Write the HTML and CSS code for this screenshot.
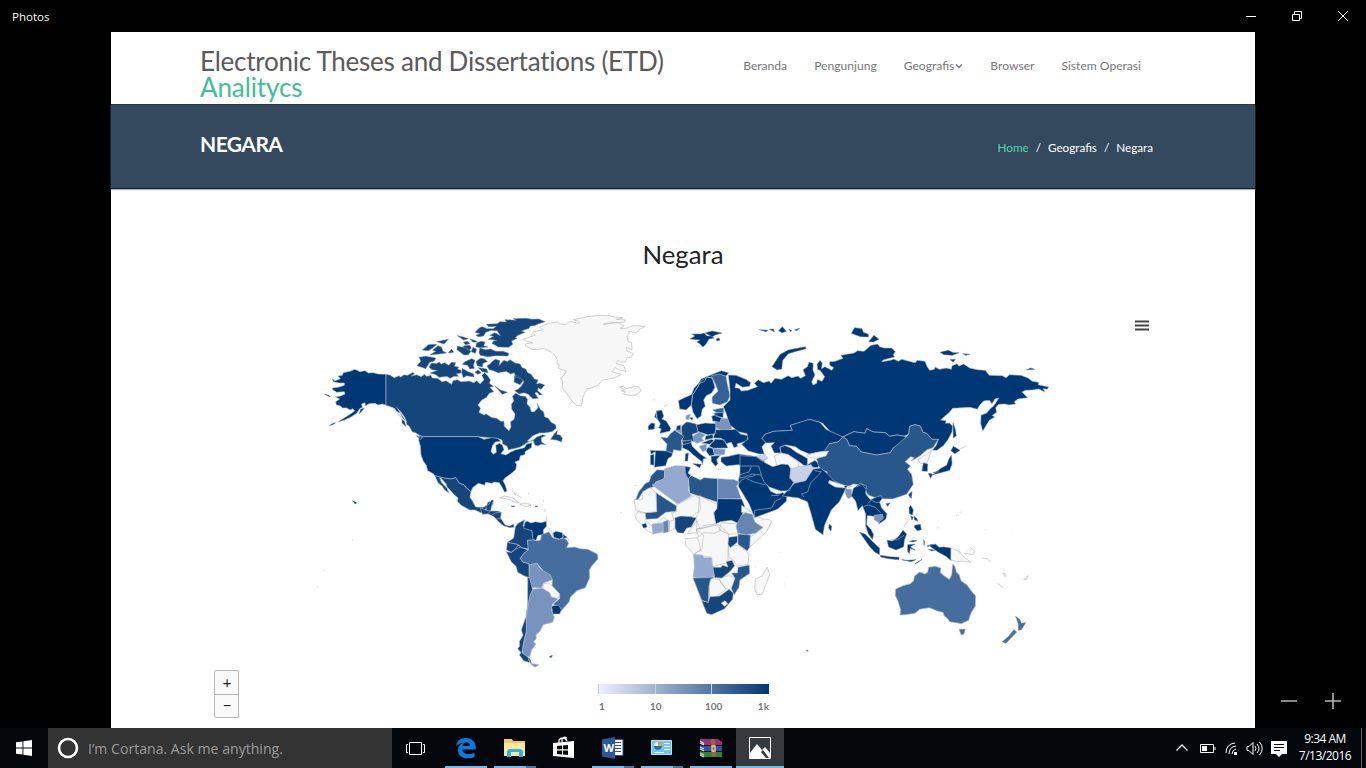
FILE: index.html
```html
<!DOCTYPE html>
<html lang="id">
<head>
<meta charset="utf-8">
<title>Photos</title>
<link rel="stylesheet" href="styles.css">
</head>
<body>
<div class="titlebar">
  <span class="app-name">Photos</span>
  <div class="controls">
    <svg width="12" height="12"><path d="M1 6.5h10"/></svg>
    <svg width="12" height="12"><path d="M1.5 4.5h7v6h-7zM3.5 4V1.5h7v7H9"/></svg>
    <svg width="12" height="12"><path d="M1 1l10 10M11 1L1 11"/></svg>
  </div>
</div>
<div class="viewer">
  <main class="photo">
    <header class="site-head">
      <h1>Electronic Theses and Dissertations (ETD) <em>Analitycs</em></h1>
      <nav><a>Beranda</a><a>Pengunjung</a><a>Geografis<svg width="8" height="6"><path d="M1 1.5l3 3 3-3" fill="none" stroke="#777" stroke-width="1.3"/></svg></a><a>Browser</a><a>Sistem Operasi</a></nav>
    </header>
    <section class="banner">
      <h2>NEGARA</h2>
      <div class="crumbs"><b>Home</b><i>/</i><span>Geografis</span><i>/</i><span>Negara</span></div>
    </section>
    <section class="chart">
      <h3>Negara</h3>
      <div class="map-row">
        <svg class="map" width="770" height="376" viewBox="300 300 770 376">
          <!-- North America -->
          <g transform="translate(310 305) scale(.33333)">
            <path class="a" d="M228 208 205 207 190 203 175 204 165 197 150 200 135 193 120 199 100 203 97 211 84 213 91 221 75 227 67 222 70 230 88 234 103 234 103 241 84 247 67 249 68 254 80 262 103 260 105 267 92 273 76 276 89 282 77 290 79 300 90 302 98 309 111 309 120 315 128 311 134 318 118 329 101 340 89 347 84 351 104 345 123 336 140 325 150 310 157 308 155 297 165 293 166 303 177 296 195 295 204 300 217 297 228 301Z"/>
            <path class="a s" d="M44 268 57 271 60 276ZM58 362 72 357 76 353 65 357ZM148 326 156 318 163 309 152 313Z"/>
            <path class="b" d="M228 208 240 210 253 218 267 212 272 216 282 209 293 211 308 202 314 207 304 213 320 209 334 215 343 208 350 214 363 211 367 219 383 220 396 230 408 227 425 238 428 227 443 224 453 230 478 228 491 233 500 227 510 237 522 224 515 211 524 203 533 212 542 225 538 234 551 245 540 247 552 260 538 265 530 277 515 286 504 300 512 310 507 322 522 330 528 326 544 337 560 340 573 349 582 348 583 364 597 377 603 365 601 351 612 343 615 327 605 313 604 298 611 288 607 274 617 264 631 272 646 274 653 283 651 296 660 307 664 320 673 320 684 308 681 293 692 314 701 320 704 335 715 340 724 352 737 359 739 370 726 380 704 384 689 384 669 392 652 408 665 409 681 395 698 389 708 392 694 398 695 411 709 420 693 418 684 423 675 421 668 404 650 414 630 427 595 435 591 424 578 417 576 405 558 399 548 411 530 414 523 403 543 399 505 395 340 395 328 391 316 383 307 381 297 363 290 359 288 347 278 340 271 325 258 318 253 310 239 306 228 301Z"/>
            <path class="b s" d="M495 82 509 68 517 65 530 71 550 71 559 64 536 65 529 58 562 56 570 50 590 51 585 44 619 46 610 41 647 40 666 43 686 42 705 50 686 56 673 62 661 63 657 70 634 78 645 82 624 91 616 97 621 100 605 108 608 118 596 127 565 126 546 115 551 108 561 106 535 103 551 94 539 91 555 83 571 92 562 77 544 76 527 82 521 93 505 95 498 91 510 86ZM510 129 526 134 541 132 557 139 579 139 596 145 594 153 556 152 533 155 511 151 507 142ZM365 174 380 176 387 171 394 178 403 173 416 181 425 172 437 173 433 184 447 187 442 192 453 196 454 204 439 206 445 214 432 214 420 220 411 214 387 217 378 209 361 204 383 196 366 194 357 186ZM327 157 347 154 377 159 373 168 359 172 347 191 336 187 321 182 333 168ZM546 170 556 163 570 167 566 182 575 173 582 166 592 170 600 164 615 174 630 177 636 188 647 192 653 203 663 208 673 222 684 225 679 237 690 235 704 240 693 253 684 248 683 257 697 269 688 270 681 261 674 264 684 280 669 281 655 268 642 263 627 266 614 257 626 251 634 244 642 230 632 220 617 216 613 203 602 207 589 199 564 203 551 197 538 194 531 183 540 177ZM512 109 525 111 521 122 534 126 509 128 497 125 500 115ZM465 170 485 161 495 166 490 181 493 190 480 192 473 181 457 178ZM511 160 524 162 532 170 519 175 517 186 502 182 498 170ZM384 122 394 126 399 139 410 144 379 148 360 149 378 139 368 136ZM442 123 452 126 467 126 483 139 475 149 462 150 441 134ZM337 135 355 119 380 118 367 130 355 137ZM380 110 415 103 402 117ZM415 144 425 132 431 142ZM460 112 472 109 479 116 467 119ZM442 92 460 96 475 101 461 105ZM481 103 494 106 503 112 488 111ZM458 127 463 122 479 121 484 129 478 136ZM555 243 571 255 592 262 577 268ZM614 212 627 214 639 227 630 239 612 231ZM489 127 500 133 496 145 484 140ZM495 202 504 195 514 203 503 208ZM722 403 735 384 742 377 740 389 750 390 757 400 754 410 739 405ZM276 341 284 350 287 364 276 354ZM456 190 474 200 490 206 492 216 470 212 460 218 456 206ZM505 188 530 192 534 203 517 200Z"/>
            <path class="n" d="M233 302 250 309 262 322 275 340 281 348M259 306 272 320 283 335 290 352"/>
            <path class="a" d="M328 391 340 395 505 395 522 403 546 398 562 400 573 409 556 411 548 421 543 439 550 448 559 442 557 421 568 415 577 420 582 434 573 446 588 450 602 441 618 434 643 428 650 417 666 413 664 428 645 440 645 449 631 452 628 466 615 471 620 479 617 494 602 507 586 518 579 527 586 541 591 558 584 562 576 547 568 533 553 531 545 535 527 532 524 541 505 535 488 548 483 560 470 550 461 539 448 535 437 518 424 522 401 519 374 512 370 506 353 497 349 481 340 469 333 450 331 423 326 405ZM318 391 338 398 330 404Z"/>
            <path class="b" d="M374 512 401 519 424 522 437 518 448 535 461 539 470 550 483 560 480 577 488 589 497 606 519 607 530 601 534 591 550 588 549 598 539 606 535 615 525 612 514 624 495 615 479 615 452 600 442 588 444 579 431 568 421 556 412 547 408 536 393 520 389 519 395 533 411 550 418 565 403 554 397 544 384 533Z"/>
          </g>
          <path class="n" d="M500 498l5-2 8 2 6 5-5-1-6-3zM520 504l6-1 5 2-5 2zM514 494l2 1M546 516l1 6M544 500l-1 1M512 491l3 3 2-1M517 495l5 3M528 493l1 1M545 509v3"/>
          <path class="a s" d="M511 506l4 0-2 1zM535 506l3 0-2 1z"/>
          <!-- Greenland and Iceland -->
          <g transform="translate(480 305) scale(.33333)" class="n">
            <path d="M128 103 166 90 157 82 187 74 179 66 205 55 235 51 241 57 257 59 270 49 298 55 297 49 280 44 323 35 355 31 389 32 403 36 429 38 409 43 436 45 431 53 396 52 369 58 413 53 433 62 421 70 436 71 459 62 496 64 477 74 469 84 446 79 448 87 441 93 444 109 455 113 456 135 438 126 442 138 460 146 452 159 442 157 436 171 423 171 413 166 409 176 431 182 438 200 417 195 407 189 395 200 424 208 407 218 390 221 369 225 351 242 334 249 321 251 309 277 304 304 289 300 275 287 262 268 246 247 248 231 242 217 252 211 259 198 234 190 238 180 231 176 232 164 225 151 214 141 193 131 158 134 136 123 138 116 159 114 142 109Z"/>
            <path d="M418 246 431 244 436 251 456 247 465 243 477 246 484 257 468 270 451 272 430 267 437 261 423 258 434 254Z"/>
          </g>
          <!-- South America -->
          <g transform="translate(480 480) scale(.33333)">
            <path class="b" d="M0 82 19 91 19 76 27 73 34 60 41 60 36 73 32 93 53 93 64 97 62 114 75 134 88 138 101 132 102 142 89 143 70 137 54 124 43 111 25 102 7 103Z"/>
            <path class="l" d="M19 91 32 93 22 102M34 106 48 98 62 97M48 117 62 116"/>
            <path class="b" d="M106 140 114 130 134 119 129 137 156 152 159 167 162 180 142 181 146 207 125 203 111 193 82 187 101 174Z"/>
            <path class="a" d="M134 128 141 123 153 129 167 125 181 128 199 124 200 138 190 150 191 164 174 166 168 181 159 179 156 152 131 145ZM219 159 228 154 247 158 250 171 239 178 221 172ZM249 162 262 172 258 180 249 176Z"/>
            <path class="b" d="M82 187 111 193 122 201 106 208 94 217 79 210ZM79 215 94 217 106 208 114 194 125 203 145 210 132 220 121 235 128 246 147 251 148 293 133 288 113 277 108 259 94 246Z"/>
            <path class="e" d="M142 181 162 180 168 182 181 181 184 166 190 162 207 155 218 173 235 178 257 174 266 190 260 203 283 201 301 206 324 208 353 223 354 237 335 258 328 271 329 294 316 323 291 332 272 350 267 366 244 392 220 372 239 356 239 342 216 320 217 299 193 276 171 250 148 255 147 251 128 246 121 235 132 220 145 210Z"/>
            <path class="g" d="M148 255 171 250 180 265 193 274 211 284 217 299 191 309 185 324 169 323 154 322 147 304ZM158 328 185 324 204 333 224 348 233 357 216 374 215 392 223 412 218 427 190 434 180 454 168 464 169 477 160 485 168 492 155 510 150 529 142 530 126 518 130 489 139 453 139 407 145 368 151 342Z"/>
            <path class="n" d="M189 312 205 308 217 318 239 342 235 356 214 351 209 338 189 326Z"/>
            <path class="a" d="M215 378 237 375 244 390 239 402 218 402Z"/>
            <path class="b" d="M143 292 148 293 153 310 158 328 151 342 145 368 139 407 139 453 130 489 126 518 142 530 152 540 154 549 132 543 118 525 123 518 113 506 119 498 118 485 129 466 124 449 138 410 143 374Z"/>
            <path class="g" d="M145 536 151 550 177 554 165 562 153 553Z"/>
            <path class="b s" d="M207 530 217 526 214 533Z"/>
            <path class="n" d="M203 142 216 154 219 169M253 176 262 172 267 183"/>
          </g>
          <!-- Europe -->
          <g transform="translate(620 350) scale(.33333)">
            <path class="a" d="M175 152 193 143 214 134 222 115 236 100 243 87 274 74 304 62 326 68 318 79 297 75 283 84 261 81 252 96 240 99 229 118 218 134 214 165 198 180 179 177ZM243 93 261 81 277 85 285 112 275 129 259 137 251 150 256 169 247 177 243 199 231 206 219 187 214 165 218 134 229 118Z"/>
            <path class="d" d="M274 77 300 72 318 79 321 97 330 137 322 156 299 165 277 160 276 142 294 123 286 102ZM278 179 310 173 312 188 289 188Z"/>
            <path class="g" d="M199 196 211 193 207 209 197 207ZM287 234 285 217 306 204 325 206 336 226 334 239 306 240ZM218 259 238 246 256 256 245 263 251 272 232 280 217 273ZM237 289 259 282 260 300 248 305ZM279 296 316 298 313 314 281 314ZM164 241 184 238 184 251Z"/>
            <path class="a" d="M275 199 286 194 304 204 300 217 278 213ZM281 190 310 187 309 203 286 198ZM230 224 256 219 287 221 287 251 265 255 232 244ZM171 228 182 225 182 240 168 241ZM91 301 144 303 158 310 155 319 144 326 137 347 103 352 106 305 93 313ZM91 316 102 312 102 346 91 344ZM257 258 278 253 280 264 255 270ZM244 279 274 268 284 272 269 283ZM267 289 285 267 313 269 324 294 281 295ZM287 239 336 239 348 237 361 252 385 257 381 273 351 282 354 289 342 293 334 277 319 281 304 265 280 264ZM188 283 213 275 217 289 240 311 260 325 250 327 248 345 244 334 219 314 207 302 187 293ZM264 292 278 295 283 315 269 318 258 303ZM273 319 302 316 290 328 294 341 287 349 274 335ZM303 322 326 319 354 312 398 318 427 322 434 337 399 342 374 351 355 344 319 348 303 335Z"/>
            <path class="a s" d="M109 183 125 181 131 199 125 207 138 213 152 235 149 243 120 250 124 236 116 233 122 221 112 206ZM85 228 95 219 104 221 103 237 85 239ZM219 341 244 343 239 353ZM197 311 205 309 203 333 195 333ZM107 190 104 200 110 206ZM210 203 219 203 216 211Z"/>
            <path class="b" d="M184 230 199 216 208 217 229 222 234 247 217 253 222 274 187 273Z"/>
            <path class="c" d="M122 262 142 263 151 251 164 241 192 259 184 271 186 288 183 303 161 299 158 310 138 302 141 282Z"/>
            <path class="b" d="M186 274 215 270 213 278 190 284Z"/>
            <path class="n" d="M101 148 105 151M132 172 141 162M110 184 120 180M290 357 303 359"/>
          </g>
          <!-- Svalbard -->
          <path class="a s" d="M690 339l5-3-3-2 5 0 4 0 3-1 3 3 4 0 3 2-5 1-3 5-3 3-3-3-3-2 3-2zM705 333l7-2 10 2-7 2-3 2-3-2zM716 339l3-1 1 2-3 1z"/>
          <!-- Africa and Arabia -->
          <g transform="translate(620 450) scale(.33333)">
            <path class="c" d="M134 61 133 87 107 96 104 109 83 116 67 128 54 149 46 152 56 126 76 100 87 96 93 78 111 59ZM108 128 170 168 168 184 137 187 112 206 77 208 73 188 110 185ZM205 83 215 77 241 90 252 83 293 86 293 157 209 129Z"/>
            <path class="h" d="M133 57 165 47 195 48 198 65 206 87 205 123 215 137 173 162 96 105 134 84Z"/>
            <path class="f" d="M293 86 344 89 357 97 350 108 364 146 293 146Z"/>
            <path class="a" d="M195 49 212 52 204 70 213 76 204 87 196 69ZM293 146 365 147 374 168 365 201 354 220 334 211 302 215 287 222 281 189 290 175Z"/>
            <path class="n" d="M42 149 67 149 68 125 91 113 108 128 110 185 65 189 48 181ZM170 165 226 136 238 145 235 185 218 199 166 202 161 209 155 189 170 184ZM238 137 291 163 291 175 281 188 287 222 241 237 227 205 241 177ZM304 218 353 222 368 251 326 253 297 239ZM365 166 404 193 428 207 447 208 455 213 441 244 391 290 389 262 428 236 402 215 377 187 364 187ZM326 287 356 286 387 310 384 343 353 349 339 330 326 321ZM228 237 264 231 296 224 327 252 324 301 324 337 279 350 273 322 221 313 245 299 250 256ZM228 237 241 237 250 226 287 222 304 240 283 250 250 248 237 262ZM197 266 233 263 239 283 242 299 222 313 197 286ZM274 386 296 387 318 417 289 440 269 443 268 404ZM297 387 326 376 345 383 342 411 327 420 309 407ZM45 197 57 182 76 190 78 211 96 228 101 253 77 239 49 208ZM406 387 427 377 442 352 449 374 435 411 427 433 412 434 404 416ZM113 219 130 202 149 215 145 244 132 219ZM149 214 168 208 166 235 149 245ZM201 251 230 213 230 249Z"/>
            <path class="h" d="M96 222 129 220 129 246 99 252ZM221 314 247 315 252 323 275 323 277 348 288 353 280 384 219 382 223 351Z"/>
            <path class="f" d="M129 216 145 210 145 246 130 249ZM365 195 376 188 397 193 405 217 429 232 406 250 378 255 353 249 348 228Z"/>
            <path class="b" d="M165 203 183 198 211 200 229 204 214 231 200 235 190 250 173 248 165 235ZM279 352 303 352 308 346 324 351 318 335 336 331 344 347 331 364 306 384 284 383ZM326 262 353 258 352 277 331 293 324 283ZM245 452 265 457 270 440 299 438 327 418 340 429 338 448 313 477 275 494 260 490Z"/>
            <path class="c" d="M354 252 391 255 389 292 382 303 354 283ZM354 352 388 345 389 370 360 390 357 412 342 435 334 415 345 385 335 369 352 369ZM219 384 280 382 271 389 267 407 265 457 245 451Z"/>
            <path class="a s" d="M66 224 77 220 81 231 71 234Z"/>
            <path class="n" d="M304 459 315 452 324 461 313 469Z"/>
            <path class="a" d="M356 88 363 54 409 47 433 65 440 94 482 123 501 137 499 154 472 178 404 203 387 162 355 109Z"/>
            <path class="l" d="M356 104 361 93 377 84 402 96 437 105M363 75 395 60 409 47M382 82 404 77 407 48M404 203 404 181 455 174 466 153 484 145M454 137 476 136 482 126"/>
            <path class="w" d="M437 88 452 98 480 118 488 128 470 132 452 124 440 102Z"/>
            <path class="n" d="M44 106h5M0 188h4M185 278v2M404 349l4 2M478 307h2M491 402h3"/>
          </g>
          <!-- Asia -->
          <g transform="translate(740 320) scale(.33333)">
            <path class="a" d="M-35 165 -12 166 18 178 32 188 29 199 8 202 -12 190 -15 203 -2 205 4 213 23 211 52 200 43 190 55 179 70 188 87 183 93 190 105 175 124 178 145 167 155 173 174 168 182 175 196 167 189 149 202 140 207 126 220 130 219 150 225 165 215 185 219 195 230 190 232 178 246 184 254 170 240 151 233 149 231 133 240 121 247 129 245 146 254 140 265 145 275 151 281 143 269 136 269 125 285 124 309 115 302 106 342 99 353 92 372 94 393 76 413 72 419 80 433 84 455 84 466 95 460 104 464 111 430 120 425 125 451 121 462 117 475 124 485 118 525 128 532 121 555 124 561 139 569 151 583 148 585 141 598 148 619 144 634 148 636 137 651 131 657 138 671 132 689 144 712 149 736 151 748 166 787 167 798 173 809 164 843 166 864 174 877 184 896 187 895 194 926 201 922 208 910 206 915 217 897 207 878 210 857 211 846 216 863 233 834 237 823 245 827 252 807 255 795 252 776 253 767 263 770 277 757 286 764 291 748 301 728 334 722 311 723 286 740 279 752 265 761 258 772 241 776 234 765 237 756 251 748 241 731 243 719 256 712 268 690 262 638 265 629 276 602 300 618 302 617 310 628 309 638 318 636 336 624 359 610 377 591 391 577 391 589 375 595 358 576 358 560 340 549 337 541 318 525 314 509 319 506 343 492 349 471 345 449 349 436 338 400 336 380 326 375 340 341 335 309 351 290 345 270 334 247 309 208 298 193 304 151 316 157 331 101 334 75 343 66 355 78 367 66 380 73 402 57 402 25 393 5 373 24 357 21 341 -5 335 -30 315 -42 280 -50 260 -30 240 -30 210Z"/>
            <path class="a" d="M66 355 75 343 101 334 157 331 151 316 208 298 240 307 258 328 309 351 294 366 268 371 266 391 233 397 208 402 181 391 166 380 137 375 120 382 123 399 103 399 93 378 103 368 79 369ZM309 351 341 335 375 340 380 326 400 336 436 338 449 349 471 345 500 350 488 366 459 385 451 398 410 405 364 396 349 379 329 377 320 358ZM120 382 133 376 151 383 169 397 190 408 203 416 202 434 225 421 240 435 232 443 197 440 171 421 145 404 123 399Z"/>
            <path class="c" d="M309 351 320 358 329 377 349 379 364 396 410 405 451 398 459 385 500 350 506 343 509 319 525 314 541 318 549 337 560 340 576 358 595 358 579 383 560 390 541 407 514 423 522 413 512 410 495 425 512 438 502 448 515 463 520 493 500 523 458 537 413 536 385 525 366 496 340 492 325 500 284 492 262 473 261 455 240 449 230 418 247 402 268 371 294 366Z"/>
            <path class="n" d="M103 408 122 399 145 404 177 429 173 446 154 447 141 433 111 438ZM534 418 560 403 575 390 567 414 561 428 541 431ZM200 405 232 397 266 393 258 408 232 415 208 413Z"/>
            <path class="i" d="M154 447 180 439 214 434 220 447 197 482 163 490 148 473ZM48 409 75 402 84 416 68 422Z"/>
            <path class="a" d="M0 407 48 410 66 423 98 440 126 432 145 434 152 446 149 474 161 487 148 512 122 513 87 501 72 485 63 465 37 462 0 475ZM163 490 197 482 220 447 241 444 258 457 282 482 306 495 322 498 310 521 298 545 274 570 254 615 249 645 226 628 211 574 202 545 175 534 127 528Z"/>
            <path class="l" d="M0 438 33 438 56 438 64 465M224 452 244 455 235 466 212 488 203 516 184 522 193 532M0 464 27 456 34 440M281 490 320 504 322 515"/>
            <path class="a s" d="M96 140 110 119 121 103 145 90 196 80 198 86 164 95 145 101 128 121 125 147 111 149ZM334 40 344 23 366 26 370 37 385 43 385 51 362 50ZM386 65 402 46 417 58 400 66ZM600 97 625 91 640 98 657 98 637 106 612 104ZM668 101 690 103 677 106ZM860 150 872 144 884 148ZM58 29 84 31 78 35ZM88 28 100 27 103 35ZM116 32 127 20 139 34 126 38ZM148 28 155 31 151 35ZM164 29 179 25 170 32ZM630 119 646 118 640 126ZM639 309 645 324 649 347 640 354ZM550 429 563 432 562 454 546 453ZM633 392 640 379 660 391 644 401ZM634 406 636 432 629 451 599 459 579 464 603 445 620 436 627 417ZM565 460 578 462 572 475ZM507 523 516 515 514 535ZM579 459 596 452 594 458Z"/>
            <path class="n" d="M660 387 680 377"/>
          </g>
          <!-- Southeast Asia -->
          <g transform="translate(780 410) scale(.33333)">
            <path class="n" d="M148 211 174 220 194 226 193 234 165 231 145 219ZM203 227 215 229 205 233ZM512 414 540 426 549 438 572 457 552 454 529 454 512 450ZM552 430 578 434 585 424 570 412"/>
            <path class="g" d="M195 236 215 238 215 261 204 266 196 252Z"/>
            <path class="a" d="M220 235 241 220 259 228 257 251 271 269 292 260 305 257 306 266 299 277 305 294 321 311 318 327 296 343 301 325 275 318 262 317 260 344 274 359 281 374 278 389 265 373 257 349 257 312 247 287 234 302 227 274 214 257Z"/>
            <path class="a s" d="M148 342 155 349 153 363 146 354ZM239 367 256 373 278 395 299 415 298 434 283 425 266 406ZM301 436 328 440 357 442 357 449 326 446 302 441ZM321 391 337 393 354 382 369 361 380 372 373 390 371 410 348 420 326 411ZM383 404 405 403 391 410 405 421 391 415 388 431 383 424ZM387 293 392 286 400 300 397 316 388 310ZM318 281 330 279 323 289ZM386 254 396 245 391 264ZM402 319 410 325 414 334 403 329ZM404 346 421 343 424 359 412 362 403 352ZM450 404 467 403 477 412 491 411 512 414 512 451 500 440 473 425 452 410ZM365 449 383 451 408 449 393 455ZM405 461 426 448 416 456ZM441 408 451 404 445 410ZM388 394 400 391 411 392 400 396ZM431 389 434 396 432 407ZM445 418 465 420 455 423ZM392 318 400 322 396 330Z"/>
            <path class="g" d="M282 316 308 313 310 325 295 338 283 329Z"/>
            <path class="l" d="M251 289 266 285 286 292 301 308M264 280 274 270 288 278 301 276M331 389 352 390 373 375M230 231 245 222 258 237"/>
            <path class="n" d="M371 349 386 331M105 365h2M528 318l3-4M540 308l2-3M473 353h2"/>
          </g>
          <!-- Oceania -->
          <g transform="translate(840 500) scale(.33333)">
            <path class="e" d="M167 267 189 257 211 251 221 242 223 229 239 216 254 222 263 217 266 202 285 199 303 204 301 218 317 231 328 238 335 225 338 192 345 200 349 216 358 225 363 242 381 255 394 273 407 288 406 318 392 341 386 361 364 371 329 365 322 355 313 348 309 337 294 334 268 323 239 328 225 340 197 344 180 345 182 329 173 301 166 287ZM357 388 376 387 372 403 363 404Z"/>
            <path class="e s" d="M527 349 541 361 544 370 557 368 544 389 535 391 535 371ZM487 425 506 409 522 389 530 396 509 418 498 430Z"/>
            <path class="n" d="M427 174 443 176 453 187M488 219 498 222 496 230ZM472 251 489 262M551 238 565 227 558 240ZM355 48l2-2M293 84h2M436 89h2M514 86h1M561 180h1"/>
          </g>
          <path class="a s2" d="M352 500l5 3-2 1zM806 650l3 1-2 .5z"/>
          <path class="n" d="M317 587l1-1M324 570h1M352 540h1"/>
        </svg>
        <svg class="menu" width="14" height="11"><path d="M0 1.5h14M0 5.5h14M0 9.5h14" stroke="#444" stroke-width="2.2"/></svg>
      </div>
      <div class="map-foot">
        <div class="zoomer"><span>+</span><span>−</span></div>
        <div class="legend"><div class="ramp"><u></u><u></u><u></u></div><div class="ticks"><span>1</span><span>10</span><span>100</span><span>1k</span></div></div>
      </div>
    </section>
  </main>
  <div class="photo-zoom"><svg width="64" height="20"><path d="M2 10h16M46 10h16M54 2v16" stroke="#b5b5b5" stroke-width="1.6"/></svg></div>
</div>
<footer class="taskbar">
  <div class="start"><svg width="16" height="16"><path fill="#fff" d="M0 2.3 6.5 1.4V7.5H0zM7.4 1.3 16 0V7.5H7.4zM0 8.4h6.5v6.2L0 13.7zM7.4 8.4H16V16L7.4 14.7z"/></svg></div>
  <div class="search"><svg width="22" height="22"><circle cx="11" cy="11" r="9" fill="none" stroke="#fff" stroke-width="2.6"/></svg><span>I’m Cortana. Ask me anything.</span></div>
  <div class="task tv"><svg width="22" height="16"><path fill="none" stroke="#fff" d="M4.500 1.500h12v12h-12zM3 3.500H1.500v8H3M18 3.500h1.500v8H18"/></svg></div>
  <div class="task open"><svg width="22" height="22"><path fill="#0a7be0" d="M1 9C2 3.500 6 1 11 1c6 0 9.700 4 9.700 9v2.500H7.500c0 3 3 4.700 6 4.700 2.400 0 4.300-.6 6-1.600v4.200c-2 1-4.500 1.500-7 1.500C6.500 21.300 3 18 3 13.500 3 10 5 7.200 8.500 5.800 5.500 6 2.800 7 1 9zM7.600 9h7.600c0-2.300-1.300-3.500-3.600-3.500-2.200 0-3.700 1.400-4 3.500z"/></svg></div>
  <div class="task open split"><svg width="22" height="20"><path fill="#f5c75d" d="M0 1h8l1 2h12v15H0z"/><path fill="#ffe69c" d="M0 5h21v13H0z"/><path fill="#26b5e8" d="M3 19v-6l2-2h12l2 2v6h-4v-5H7v5z"/></svg></div>
  <div class="task"><svg width="22" height="24"><path fill="#fff" d="M0 7 21 5v17L0 20z"/><path d="M6 7V4q1-2 4-2t4 3M9 6V3q2-3 5-1" fill="none" stroke="#fff" stroke-width="1.300"/><path fill="#03060b" d="M4 10l5-.5v3.800H4zM10 9.400l5-.5v4.400h-5zM4 14.500h5v4L4 18zM10 14.500h5v4.600l-5-.5z"/></svg></div>
  <div class="task open split"><svg width="22" height="22"><path fill="#fff" stroke="#2b579a" d="M11 2.500h10v16H11z"/><path stroke="#2b579a" d="M13 5.500h6M13 8.500h6M13 11.500h6M13 14.500h6"/><path fill="#2b579a" d="M0 2.500 13 0v22L0 19.500z"/><text x="1.500" y="15" font-size="11" font-weight="700" fill="#fff" font-family="Open Sans, sans-serif">W</text></svg></div>
  <div class="task open split"><svg width="22" height="16"><path fill="#6dc6f1" stroke="#b4e5fb" d="M.5.500h20v14H.5z"/><circle cx="7" cy="6" r="4" fill="#fff"/><path fill="#1976b9" d="M7 6V2a4 4 0 1 1-4 4z"/><path fill="#f49b28" d="M7 6V2a4 4 0 0 1 4 4z"/><path stroke="#fff" d="M13 3.500h6M13 6.500h6M13 9.500h6M3 12.500h10"/></svg></div>
  <div class="task open"><svg width="24" height="20"><path fill="#a32979" d="M1 1h18l4 3v3H4L1 5z"/><path fill="#354fae" d="M1 7l3 1h19v5H4l-3-2z"/><path fill="#298638" d="M1 13l3 1h19v5H4l-3-2z"/><path stroke="#111" stroke-width=".8" d="M4 7.500h19M4 13.500h19"/><path stroke="#e6dfcf" stroke-width="1.300" d="M1 3l4 2.500M1 5l4 2M1 9l4 2M1 11l4 2M1 15l4 2M1 17l4 2"/><path fill="#9b653a" d="M12 1h4l1 18h-4z"/><path fill="none" stroke="#ead287" stroke-width="1.300" d="M13 8h3v5h-3z"/></svg></div>
  <div class="task open active"><svg width="22" height="22"><path fill="none" stroke="#fff" d="M.5.500h21v21H.5z"/><path fill="#fff" d="M1 21v-5l7-9 5 6 3-3 5 6v5z"/><path fill="#36393e" d="M12 15l2-2 6 8h-3z"/></svg></div>
  <div class="tray">
    <svg width="112" height="20"><g fill="none" stroke="#fff"><path stroke-width="1.300" d="M.5 12.500 6 7l5.500 5.500"/><path d="M24.500 6.500h13v8h-13zM39 9v3"/><path d="M50 15q0-9 9-10M53 16q0-7 7-8M56 16q0-4 4-5M71 8.500h2l4-4v12l-4-4h-2zM79 8q2 2.500 0 5M81 6q4 4.500 0 9M83.500 4q5.500 6.500 0 13"/></g><path fill="#fff" d="M26 8h5v5h-5zM58 14h3v3h-3zM95 3h16v13h-5l-3 3-3-3h-5z"/><path stroke="#03060b" d="M98 6.500h10M98 9.500h10M98 12.500h6"/></svg>
    <div class="clock"><span>9:34 AM</span><span>7/13/2016</span></div>
  </div>
</footer>
</body>
</html>
```
FILE: styles.css
```css
* { box-sizing: border-box; }
body { margin: 0; width: 1366px; height: 768px; overflow: hidden; background: #000; color: #fff; font-family: Lato, sans-serif; }
h1, h2, h3 { margin: 0; font-weight: 400; }
svg { display: block; flex-shrink: 0; }
.titlebar { height: 32px; display: flex; justify-content: space-between; padding: 0 17px 0 12px; align-items: center; font: 11.5px "Open Sans", sans-serif; }
.controls { display: flex; gap: 34px; }
.controls svg { fill: none; stroke: #fff; }
.viewer { height: 696px; display: flex; padding-left: 111px; }
.photo { width: 1144px; height: 696px; background: #fff; color: #222; }
.site-head { height: 72px; display: flex; justify-content: space-between; align-items: flex-start; padding: 17px 114px 0 89px; }
h1 { width: 480px; font-size: 26px; line-height: 25.5px; color: #5a5a5a; white-space: nowrap; letter-spacing: -.25px; }
h1 em { display: block; font-style: normal; color: #3fbf92; letter-spacing: -.1px; }
nav { display: flex; gap: 27px; font-size: 12.1px; line-height: 16px; color: #777; padding-top: 9px; }
nav a { display: flex; align-items: center; gap: 1px; white-space: nowrap; }
.banner { height: 85px; background: #34495e; border-top: 1px solid #26384c; border-bottom: 1px solid #12202e; box-shadow: 0 1px 1px #aab3bd; display: flex; justify-content: space-between; padding: 25px 102px 0 89px; color: #fff; }
h2 { font-size: 21px; line-height: 28px; font-weight: 700; letter-spacing: -.55px; }
.crumbs { display: flex; gap: 7px; font-size: 11.7px; line-height: 16px; padding-top: 9px; }
.crumbs b { font-weight: 400; color: #4fd8b0; }
.crumbs i { font-style: normal; }
.chart { height: 539px; padding-top: 48px; }
h3 { font-size: 25.8px; line-height: 34px; text-align: center; }
.map-row { display: flex; margin-top: 29px; padding-left: 189px; height: 370px; }
.map { overflow: visible; }
.map path { stroke: #b0bccb; stroke-width: 1.8; stroke-linejoin: round; }
.map path.s { stroke: #6681a5; stroke-width: 1.6; }
.map path.s2 { stroke: none; }
.map > path { stroke-width: .6; }
.map > path.s { stroke-width: .5; }
.map .a { fill: #003775; }
.map .b { fill: #14467c; }
.map .c { fill: #28578b; }
.map .d { fill: #356295; }
.map .e { fill: #456e9e; }
.map .f { fill: #6685b3; }
.map .g { fill: #7894be; }
.map .h { fill: #94a9cf; }
.map .i { fill: #c9d1e8; }
.map .w { fill: #fff; }
.map path.n, .map .n path { fill: #f7f7f7; stroke: #b4b4b4; }
.map path.l { fill: none; }
.menu { margin: 20px 0 0 65px; }
.map-foot { display: flex; padding-left: 103px; align-items: flex-start; }
.zoomer { width: 25px; height: 48px; border: 1px solid #b7b7b7; border-radius: 2px; background: #f9f9f9; font-size: 15px; }
.zoomer span { display: grid; place-items: center; height: 23px; line-height: 18px; padding: 0 0 2px 1px; }
.zoomer span + span { border-top: 1px solid #b7b7b7; }
.legend { margin: 14px 0 0 359px; width: 171px; }
.ramp { height: 10px; background: linear-gradient(90deg, #efefff, #003775); display: grid; grid-template-columns: 56px 56px 1fr; border-left: 1px solid #ccc; }
.ramp u + u { border-left: 1px solid #cbd5e2; }
.ticks { display: grid; grid-template-columns: 50px 56px 44px 1fr; font: 700 10px/14px Lato, sans-serif; color: #777; padding: 5px 0 0 1px; }
.ticks span { white-space: nowrap; }
.ticks span:nth-child(2) { padding-left: 1px; }
.ticks span:nth-child(3) { text-align: left; }
.ticks span:last-child { text-align: right; }
.photo-zoom { align-self: flex-end; padding: 0 0 17px 24px; }
.taskbar { height: 40px; display: flex; background: #03060b; font-family: "Open Sans", sans-serif; }
.start { width: 48px; display: grid; place-items: center; }
.search { width: 344px; background: #333; display: flex; align-items: center; gap: 9px; padding-left: 9px; color: #9b9b9b; font-size: 14.1px; }
.task { width: 48px; margin-right: 1px; display: grid; place-items: center; padding-top: 1px; border-bottom: 2px solid transparent; }
.task.tv { margin-right: 2px; padding-top: 3px; }
.task.open { border-image: linear-gradient(90deg, transparent 4px, #76b9ed 4px 44px, transparent 44px) 1; border-width: 0 0 2px; }
.task.split { border-image-source: linear-gradient(90deg, transparent 4px, #76b9ed 4px 35px, #4a7599 35px 44px, transparent 44px); }
.task.active { background: #36393e; border-image: none; border-bottom: 2px solid #76b9ed; }
.tray { margin-left: auto; display: flex; align-items: center; border-right: 1px solid #666; margin-right: 4px; padding-right: 9px; gap: 10px; }
.clock { width: 54px; font-size: 12px; line-height: 17px; letter-spacing: -.5px; display: flex; flex-direction: column; align-items: center; padding-bottom: 2px; white-space: nowrap; }
```
